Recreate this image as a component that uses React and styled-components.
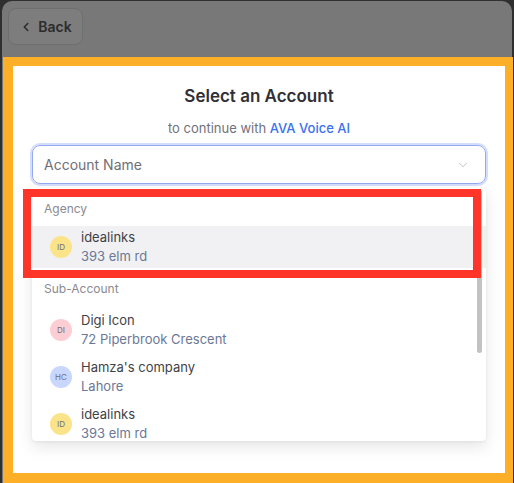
import styled, { createGlobalStyle } from "styled-components"
import { ChevronLeft, ChevronDown } from "lucide-react"

const GlobalStyle = createGlobalStyle`
  html, body {
    margin: 0;
    padding: 0;
    background: #2f2f2f;
    font-family: Inter, "Noto Sans", "Liberation Sans", sans-serif;
  }
`

const Page = styled.div`
  height: 483px;
  padding: 1px 2px 0 2px;
  box-sizing: border-box;
`

const Window = styled.div`
  height: 100%;
  background: #787878;
  border-radius: 10px 10px 0 0;
  display: flex;
  flex-direction: column;
`

const TopBar = styled.div`
  height: 56px;
  box-sizing: border-box;
  padding: 7px 6px;
  display: flex;
  align-items: flex-start;
`

const BackButton = styled.button`
  width: 75px;
  height: 37px;
  background: #7d7d7d;
  border: 1px solid #6f6f6f;
  border-radius: 8px;
  display: flex;
  align-items: center;
  justify-content: center;
  gap: 5px;
  padding: 0 2px 0 2px;
  font-family: inherit;
  font-size: 14px;
  font-weight: 600;
  color: #2c2c2c;
`

const Frame = styled.div`
  flex: 1;
  margin: 0 -1px 0 1px;
  border-style: solid;
  border-color: #fdb027;
  border-width: 9px 8px 10px 10px;
  background: #fff;
  display: flex;
  flex-direction: column;
`

const Card = styled.div`
  position: relative;
  padding: 18px 19px 0;
  display: flex;
  flex-direction: column;
`

const Title = styled.h2`
  margin: 0;
  text-align: center;
  font-size: 17px;
  line-height: 24px;
  font-weight: 600;
  color: #303034;
`

const Subtitle = styled.p`
  margin: 10px 0 0;
  text-align: center;
  font-size: 13px;
  line-height: 20px;
  color: #71717a;

  span {
    color: #3b72f0;
    font-weight: 500;
  }
`

const Select = styled.div`
  margin-top: 7px;
  height: 39px;
  box-sizing: border-box;
  border: 1px solid #93a9f3;
  box-shadow: 0 0 0 2px #d3ddfc;
  border-radius: 8px;
  display: flex;
  align-items: center;
  justify-content: space-between;
  padding: 0 15px 0 11px;
  font-size: 14px;
  color: #6f6f76;
`

const MenuWrap = styled.div`
  position: relative;
  margin-top: 4px;
`

const Menu = styled.div`
  height: 253px;
  overflow: hidden;
  background: #fff;
  border-radius: 4px;
  box-shadow: 0 6px 16px rgba(0, 0, 0, 0.1), 0 1px 3px rgba(0, 0, 0, 0.06);
`

const ScrollThumb = styled.div`
  position: absolute;
  right: 4px;
  top: 2px;
  width: 5px;
  height: 163px;
  border-radius: 3px;
  background: #c2c2c2;
`

const Group = styled.div`
  display: flex;
  flex-direction: column;
  gap: 5px;
`

const GroupLabel = styled.div`
  padding: 12px 12px ${({ first }) => (first ? "3px" : "6px")};
  font-size: 12px;
  line-height: 18px;
  color: #8a8a90;
`

const Item = styled.div`
  height: 42px;
  display: flex;
  align-items: center;
  gap: 9px;
  padding-left: 18px;
  background: ${({ active }) => (active ? "#f1f1f3" : "transparent")};
`

const Avatar = styled.div`
  width: 22px;
  height: 22px;
  border-radius: 50%;
  background: ${({ tone }) => tone};
  display: flex;
  align-items: center;
  justify-content: center;
  font-size: 8px;
  color: #6e6e73;
  flex-shrink: 0;
`

const Info = styled.div`
  display: flex;
  flex-direction: column;
  font-size: 13px;
  line-height: 19px;
`

const Name = styled.div`
  color: #3f3f46;
`

const Address = styled.div`
  color: #6b7796;
`

const Highlight = styled.div`
  position: absolute;
  left: 10px;
  top: 123px;
  width: 458px;
  height: 89px;
  box-sizing: border-box;
  border: 8px solid #ff3529;
  pointer-events: none;
`

const yellow = "#fbe38a"
const pink = "#fdcdd4"
const blue = "#c9d6fd"

const subAccounts = [
  { initials: "DI", name: "Digi Icon", address: "72 Piperbrook Crescent", tone: pink },
  { initials: "HC", name: "Hamza's company", address: "Lahore", tone: blue },
  { initials: "ID", name: "idealinks", address: "393 elm rd", tone: yellow },
]

const App = () => {
  return (
    <Page>
      <GlobalStyle />
      <Window>
        <TopBar>
          <BackButton>
            <ChevronLeft size={14} strokeWidth={2.6} />
            Back
          </BackButton>
        </TopBar>
        <Frame>
          <Card>
            <Title>Select an Account</Title>
            <Subtitle>
              to continue with <span>AVA Voice AI</span>
            </Subtitle>
            <Select>
              Account Name
              <ChevronDown size={14} strokeWidth={1.5} color="#b8b8be" />
            </Select>
            <MenuWrap>
              <Menu>
                <Group>
                  <GroupLabel first>Agency</GroupLabel>
                  <Item active>
                    <Avatar tone={yellow}>ID</Avatar>
                    <Info>
                      <Name>idealinks</Name>
                      <Address>393 elm rd</Address>
                    </Info>
                  </Item>
                </Group>
                <Group>
                  <GroupLabel>Sub-Account</GroupLabel>
                  {subAccounts.map((acc) => (
                    <Item key={acc.name + acc.initials}>
                      <Avatar tone={acc.tone}>{acc.initials}</Avatar>
                      <Info>
                        <Name>{acc.name}</Name>
                        <Address>{acc.address}</Address>
                      </Info>
                    </Item>
                  ))}
                </Group>
              </Menu>
              <ScrollThumb />
            </MenuWrap>
            <Highlight />
          </Card>
        </Frame>
      </Window>
    </Page>
  )
}

export default App
